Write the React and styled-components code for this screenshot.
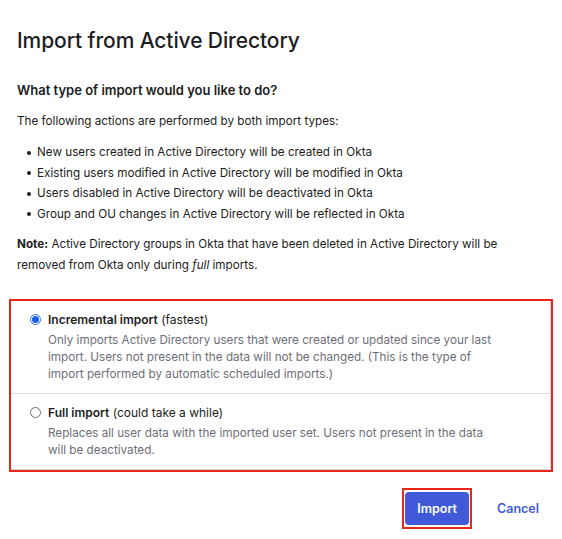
import React from "react";
import styled, { createGlobalStyle } from "styled-components";

const GlobalStyle = createGlobalStyle`
  html, body {
    margin: 0;
    padding: 0;
    background: #ffffff;
  }
  body {
    font-family: Inter, "Noto Sans", Arial, sans-serif;
    color: #1d1d21;
  }
`;

const Dialog = styled.div`
  width: 562px;
  box-sizing: border-box;
  padding: 27px 9px 0 9px;
`;

const Body = styled.div`
  padding: 0 8px;
`;

const Title = styled.h1`
  margin: 0 0 25px;
  font-size: 21px;
  line-height: 28px;
  font-weight: 500;
  letter-spacing: -0.1px;
`;

const Question = styled.h2`
  margin: 0 0 11px;
  font-size: 13px;
  line-height: 20px;
  font-weight: 600;
`;

const Text = styled.p`
  margin: 0 0 10px;
  font-size: 11.7px;
  line-height: 21px;
`;

const List = styled.ul`
  margin: 0 0 10px;
  padding: 0 0 0 10px;
  list-style: none;
  font-size: 11.7px;
  line-height: 20.5px;
`;

const Item = styled.li`
  display: flex;
  align-items: center;
  &::before {
    content: "";
    flex: 0 0 4px;
    height: 4px;
    margin: 1px 6px 0 0;
    border-radius: 50%;
    background: #1d1d21;
  }
`;

const Highlight = styled.div`
  border: 2px solid #e8261c;
  margin-top: 23px;
`;

const Fieldset = styled.div`
  border: 1px solid #d7d7dc;
  border-top: none;
  border-left: none;
`;

const Option = styled.label`
  display: grid;
  grid-template-columns: 11px 1fr;
  column-gap: 7px;
  padding: 10px 20px 10px 19px;
  border-top: ${(p) => (p.$first ? "none" : "1px solid #dcdce0")};
  cursor: pointer;
`;

const Radio = styled.span`
  width: 11px;
  height: 11px;
  margin-top: 3px;
  border-radius: 50%;
  box-sizing: border-box;
  border: 1px solid ${(p) => (p.$checked ? "#3a72e8" : "#6e6e78")};
  background: #fff;
  display: flex;
  align-items: center;
  justify-content: center;
  &::after {
    content: "";
    width: 7px;
    height: 7px;
    border-radius: 50%;
    background: ${(p) => (p.$checked ? "#1a5fe6" : "transparent")};
  }
`;

const OptionLabel = styled.div`
  font-size: 12px;
  line-height: 18px;
  strong {
    font-weight: 600;
  }
`;

const OptionDesc = styled.div`
  grid-column: 2;
  max-width: 448px;
  margin-top: 3px;
  font-size: 11.7px;
  line-height: 17px;
  color: #6e6e78;
`;

const Footer = styled.div`
  display: flex;
  justify-content: flex-end;
  align-items: center;
  gap: 16px;
  padding: 16px 5px 0 0;
`;

const Focus = styled.div`
  border: 2px solid #e8261c;
  padding: 2px 1px;
`;

const Button = styled.button`
  height: 33px;
  padding: 0 12px;
  border: none;
  border-radius: 4px;
  background: #4059d8;
  color: #fff;
  font-family: inherit;
  font-size: 12.5px;
  font-weight: 600;
  display: block;
`;

const LinkButton = styled.a`
  color: #4059d8;
  font-size: 12.5px;
  font-weight: 600;
  text-decoration: none;
  padding: 0 9px;
  cursor: pointer;
`;

const bullets = [
  "New users created in Active Directory will be created in Okta",
  "Existing users modified in Active Directory will be modified in Okta",
  "Users disabled in Active Directory will be deactivated in Okta",
  "Group and OU changes in Active Directory will be reflected in Okta",
];

export default function App() {
  return (
    <>
      <GlobalStyle />
      <Dialog>
        <Body>
          <Title>Import from Active Directory</Title>
          <Question>What type of import would you like to do?</Question>
          <Text>The following actions are performed by both import types:</Text>
          <List>
            {bullets.map((b) => (
              <Item key={b}>{b}</Item>
            ))}
          </List>
          <Text>
            <strong>Note:</strong> Active Directory groups in Okta that have been
            deleted in Active Directory will be removed from Okta only during{" "}
            <em>full</em> imports.
          </Text>
        </Body>
        <Highlight>
          <Fieldset>
            <Option $first>
              <Radio $checked />
              <OptionLabel>
                <strong>Incremental import</strong> (fastest)
              </OptionLabel>
              <OptionDesc>
                Only imports Active Directory users that were created or updated
                since your last import. Users not present in the data will not be
                changed. (This is the type of import performed by automatic
                scheduled imports.)
              </OptionDesc>
            </Option>
            <Option>
              <Radio />
              <OptionLabel>
                <strong>Full import</strong> (could take a while)
              </OptionLabel>
              <OptionDesc>
                Replaces all user data with the imported user set. Users not
                present in the data will be deactivated.
              </OptionDesc>
            </Option>
          </Fieldset>
        </Highlight>
        <Footer>
          <Focus>
            <Button>Import</Button>
          </Focus>
          <LinkButton>Cancel</LinkButton>
        </Footer>
      </Dialog>
    </>
  );
}
